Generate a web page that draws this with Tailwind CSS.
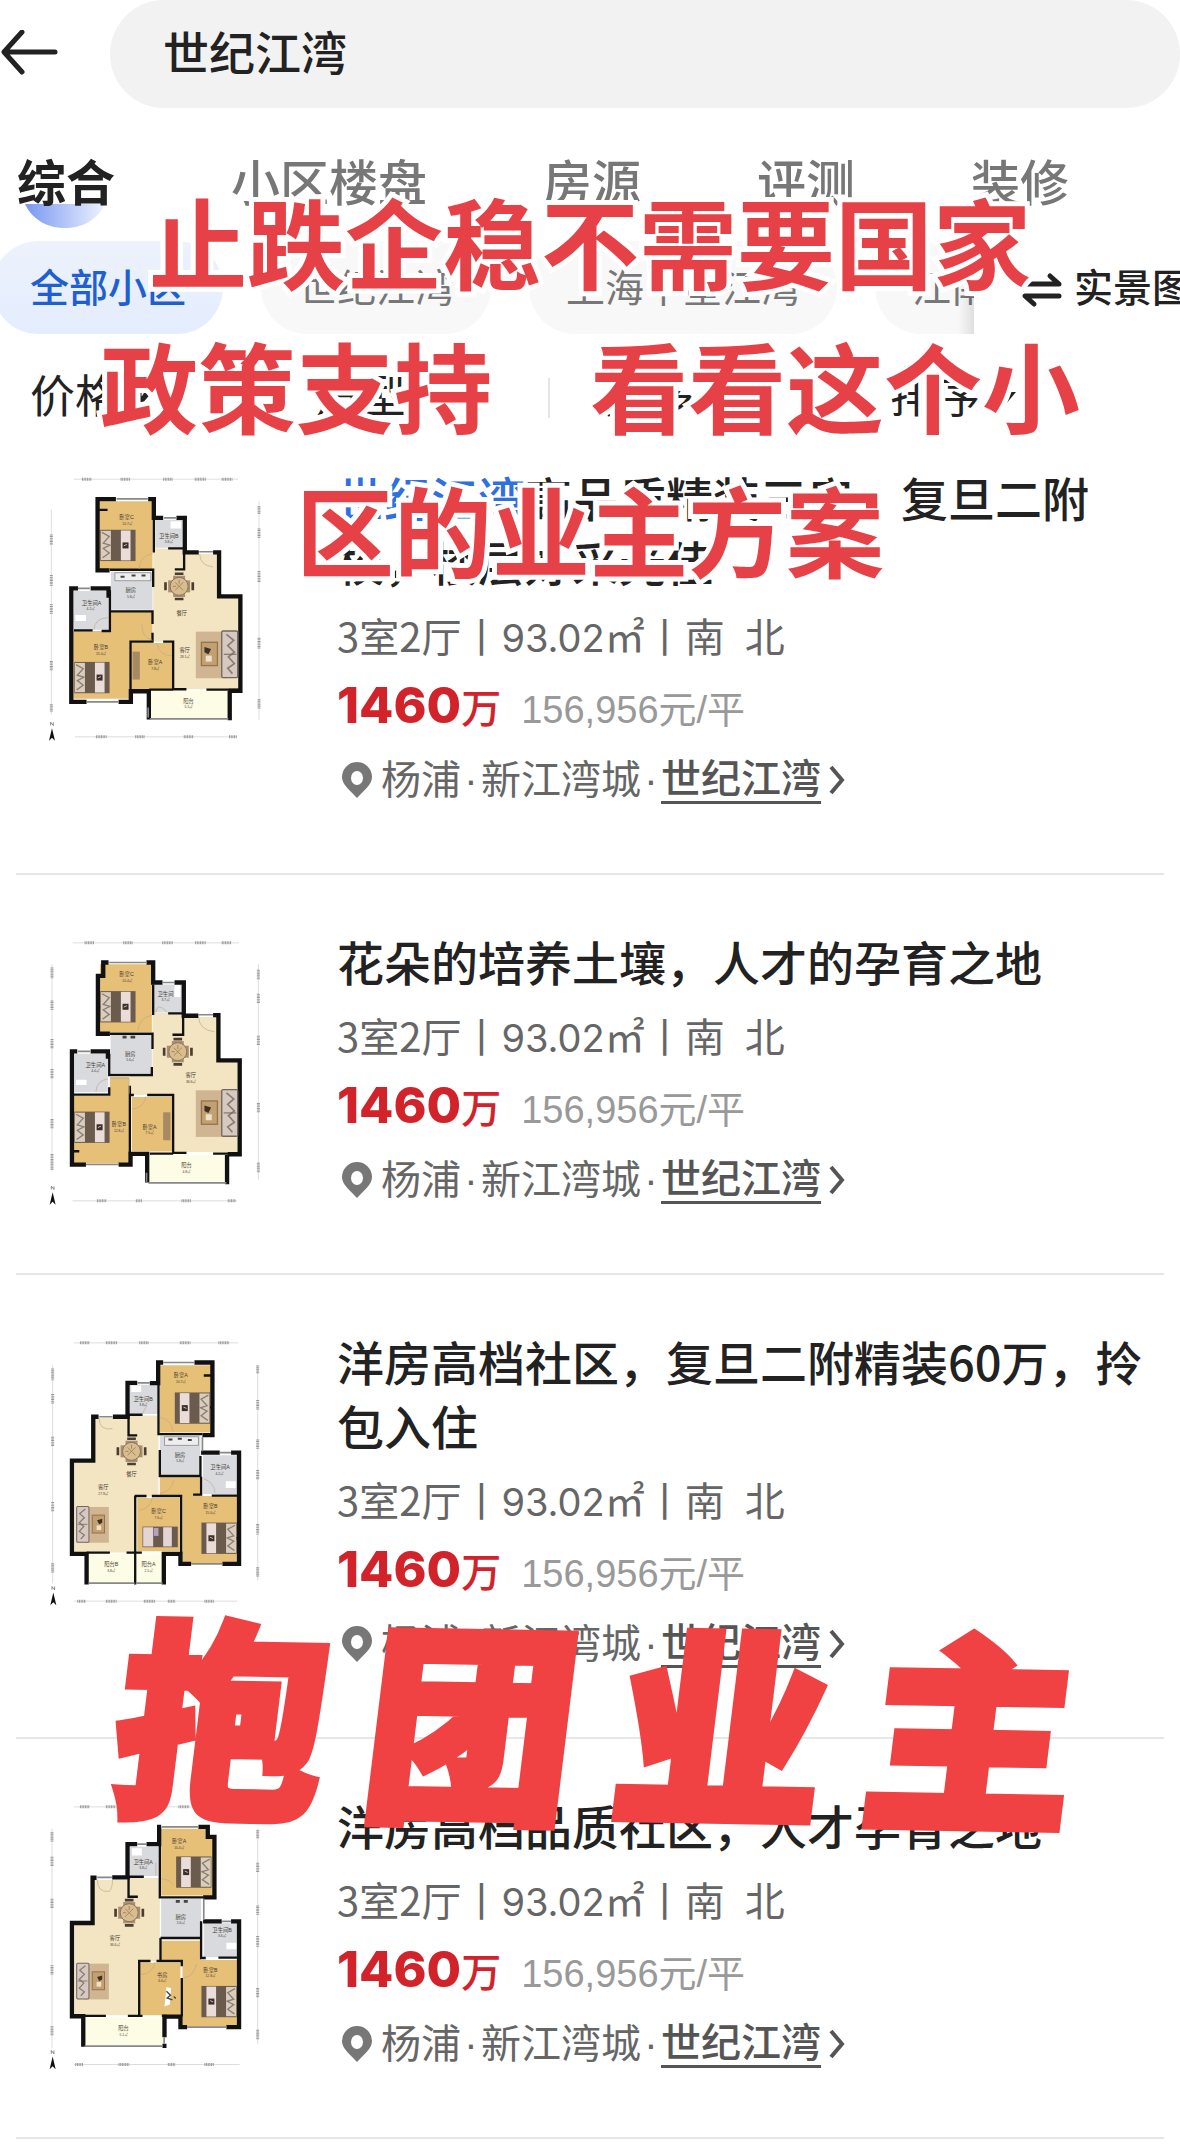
<!DOCTYPE html>
<html lang="zh-CN">
<head>
    <meta charset="UTF-8">
    <meta name="viewport" content="width=device-width, initial-scale=1.0">
    <title>世纪江湾 | 搜索</title>
    <script src="https://cdn.jsdelivr.net/npm/@tailwindcss/browser@4"></script>
</head>
<body class="bg-white text-[#222] font-['Liberation_Sans','Noto_Sans_CJK_SC',sans-serif]">

    <!-- shared furniture for the floor plans -->
    <svg class="hidden" aria-hidden="true">
        <defs>
            <symbol id="bed" viewBox="0 0 106 94" overflow="visible">
                <rect width="106" height="94" fill="#6b5b4d"/>
                <rect x="2" y="3" width="30" height="88" fill="#d9cdbd"/>
                <path d="M5 8l22 12-18 20 20 6-20 10 18 14-20 14" fill="none" stroke="#8b7f73" stroke-width="4"/>
                <rect x="62" y="2" width="29" height="90" fill="#eadcd8"/>
                <rect x="67" y="38" width="18" height="18" fill="#3d3028"/>
                <path d="M71 48l9-4" stroke="#cbb" stroke-width="3"/>
            </symbol>
            <symbol id="sofa" viewBox="0 0 130 146" overflow="visible">
                <rect y="4" width="95" height="140" fill="#cfb592"/>
                <rect x="17" y="36" width="48" height="70" fill="#c3a070" stroke="#94754f" stroke-width="4"/>
                <path d="M26 50l20 6-8 16-12-6z" fill="#3d3028"/>
                <rect x="30" y="76" width="18" height="18" fill="#efe2cc"/>
                <rect x="78" y="2" width="48" height="140" rx="4" fill="#d5c9c2" stroke="#75655c" stroke-width="4"/>
                <path d="M92 12l22 18-18 16 20 20-18 14 18 20-20 14 14 16" fill="none" stroke="#8b7b72" stroke-width="5"/>
                <path d="M84 72h38" stroke="#75655c" stroke-width="3"/>
            </symbol>
            <symbol id="dining" viewBox="0 0 90 84" overflow="visible">
                <path d="M32 4h26M32 80h26M4 30v24M86 30v24" stroke="#4a3d33" stroke-width="8"/>
                <rect x="27" y="10" width="36" height="64" fill="#a98f73"/>
                <rect x="12" y="24" width="66" height="36" fill="#a98f73"/>
                <circle cx="45" cy="42" r="27" fill="#d8bd8e" stroke="#8a7357" stroke-width="3"/>
                <path d="M33 30l24 24M57 30L33 54M45 22v12M26 42h10" stroke="#a8885c" stroke-width="3"/>
            </symbol>
            <symbol id="north" viewBox="0 0 24 60" overflow="visible">
                <path d="M12 18L3 56l9-9 9 9z" fill="#111"/>
                <path d="M8 10V0l8 10V0" fill="none" stroke="#555" stroke-width="2"/>
            </symbol>
        </defs>
    </svg>

    <main class="relative overflow-hidden pb-1">
        <header>
            <form class="flex items-center h-27">
                <button type="button" aria-label="返回" class="w-[110px] shrink-0">
                    <svg class="w-15 h-12" viewBox="0 0 60 48" fill="none" stroke="#222" stroke-width="5" stroke-linecap="round" stroke-linejoin="round">
                        <path d="M55 22H5M22 2L4 22l18 20"/>
                    </svg>
                </button>
                <input type="search" aria-label="搜索小区" value="世纪江湾" class="flex-1 min-w-0 h-27 pl-[53px] pr-10 pb-2 rounded-full bg-[#f2f2f2] text-[46px] font-medium outline-none appearance-none">
            </form>

            <nav class="flex gap-29 px-[17px] pt-10 h-[133px] text-[49px] leading-[72px] text-[#777] font-medium whitespace-nowrap">
                <button type="button" class="relative h-[72px] font-bold text-[#222]">
                    <svg class="absolute left-2 top-14 w-20 h-6" viewBox="0 0 80 24">
                        <defs>
                            <linearGradient id="smile" x1="0" x2="1"><stop offset="0" stop-color="#7897f0"/><stop offset="1" stop-color="#eef3ff"/></linearGradient>
                        </defs>
                        <path d="M0 0h80C72 17 56 24 40 24S8 17 0 0z" fill="url(#smile)"/>
                    </svg>
                    <span class="relative">综合</span>
                </button>
                <button type="button" class="h-[72px]">小区楼盘</button>
                <button type="button" class="h-[72px]">房源</button>
                <button type="button" class="h-[72px]">评测</button>
                <button type="button" class="h-[72px]">装修</button>
            </nav>

            <div class="flex h-[93px] text-[39px] whitespace-nowrap">
                <div class="relative flex flex-1 min-w-0 gap-[38px] -ml-2 overflow-hidden text-[#777]">
                    <button type="button" class="shrink-0 pt-1 pl-[38px] pr-[37px] rounded-full bg-linear-to-b from-[#edf2fb] to-[#e4edff] text-[#1f5fd0] font-medium">全部小区</button>
                    <button type="button" class="shrink-0 pt-1 px-[37px] rounded-full bg-[#f8f8f8]">世纪江湾</button>
                    <button type="button" class="shrink-0 pt-1 px-[37px] rounded-full bg-[#f8f8f8]">上海中星江湾</button>
                    <button type="button" class="shrink-0 pt-1 px-[37px] rounded-full bg-[#f8f8f8]">江南</button>
                    <div class="absolute right-0 inset-y-0 w-4 bg-linear-to-r from-transparent to-black/10"></div>
                </div>
                <button type="button" class="flex items-center gap-3 w-[206px] pt-1 pl-12 shrink-0 overflow-hidden font-medium">
                    <svg class="w-10 h-9 shrink-0" viewBox="0 0 40 36" fill="none" stroke="#222" stroke-width="5" stroke-linecap="round" stroke-linejoin="round">
                        <path d="M3 12h34L28 4M37 24H3l9 8"/>
                    </svg>
                    实景图
                </button>
            </div>

            <div class="flex items-center h-31 pt-1 pl-[30px] text-[45px] whitespace-nowrap">
                <button type="button" class="flex items-center gap-3 w-[286px]">价格
                    <svg class="w-5 h-3" viewBox="0 0 20 12"><path d="M0 0h20L10 12z" fill="#222"/></svg>
                </button>
                <button type="button" class="flex items-center gap-3 w-[232px]">户型
                    <svg class="w-5 h-3" viewBox="0 0 20 12"><path d="M0 0h20L10 12z" fill="#222"/></svg>
                </button>
                <span class="w-[2px] h-10 bg-[#e5e5e5]"></span>
                <button type="button" class="flex items-center gap-3 w-[340px] pl-[54px]">更多
                    <svg class="w-5 h-3" viewBox="0 0 20 12"><path d="M0 0h20L10 12z" fill="#222"/></svg>
                </button>
                <button type="button" class="flex items-center gap-4">排序
                    <svg class="w-5 h-3" viewBox="0 0 20 12"><path d="M0 0h20L10 12z" fill="#222"/></svg>
                </button>
            </div>
        </header>

        <section class="px-4">
            <article class="flex pt-[7px] pb-[52px] border-b-2 border-[#e6e6e6]">
                <svg class="w-[233px] h-70 mt-[6px] ml-6 mr-16 shrink-0" viewBox="120 90 700 840" role="img" aria-label="户型图">
                    <g stroke="#ccc" stroke-width="2"><path d="M222 114H715M225 888H712M154 205V820M778 180V838"/></g>
                    <g fill="none" stroke="#999" stroke-width="9" stroke-dasharray="3 2">
                        <path d="M246 114h30M362 114h30M490 114h30M585 114h34M666 114h32M288 888h32M406 888h30M552 888h30M688 888h24M154 280v32M154 402v32M154 490v30M154 660v28M154 790v22M778 195v24M778 262v30M778 390v34M778 590v34M778 775v30"/>
                    </g>
                    <path d="M460 322h90v16h110v132h60v275H520V602h-60z" fill="#f3e5c1"/>
                    <path d="M298 180h160v204H298zM220 570h113v-58h125v90h-68v172H220zM394 606h124v138H394z" fill="#e7c078"/>
                    <path d="M466 236h82v84h-82zM333 392h125v114H333zM222 450h104v116H222z" fill="#d9dade"/>
                    <path d="M450 750h236v82H450z" fill="#fdfce5"/>
                    <path d="M345 395h108v24H345z" fill="#eee" stroke="#777" stroke-width="2"/>
                    <path d="M362 407h12M395 403h12M425 403h12" stroke="#444" stroke-width="6"/>
                    <path d="M512 240h32v22h-32zM226 522h32v18h-32z" fill="#fff"/>
                    <path d="M398 632h22v84h-22z" fill="#a88a62"/>
                    <g fill="none" stroke="#111" stroke-width="13">
                        <path d="M348 174H293v214h36M445 174h17v56h28M530 230h25v104h42M640 334h18v132h64v284h-36M234 442H214v341h46M272 442h54v28M356 783h37v-32h54v85M690 750v88"/>
                    </g>
                    <g fill="none" stroke="#111" stroke-width="7">
                        <path d="M462 236v98M330 386h130v52M330 448v122h-25M222 568h56M332 511h126v38M458 575v27h-66v146M490 602h30v143h40M505 322h48v63h-28M298 206h25M520 746h-72M620 746h100"/>
                    </g>
                    <path d="M350 173h94M234 442h36M260 783h96M450 834h236M598 332h42M445 800v30M492 230h38" stroke="#888" stroke-width="5"/>
                    <path d="M418 384q0-40 40-46M600 340q0 32 40 38M426 550q0 40 32 48M470 606q10 40 46 38M282 566q2-34 42-36" fill="none" stroke="#b9a98c" stroke-width="2"/>
                    <use href="#bed" x="301" y="266" width="106" height="94"/>
                    <use href="#bed" x="223" y="663" width="106" height="94"/>
                    <use href="#dining" x="493" y="394" width="90" height="84"/>
                    <use href="#sofa" x="588" y="568" width="130" height="146"/>
                    <use href="#north" x="144" y="844" width="24" height="60"/>
                    <g font-size="16" fill="#443a30" text-anchor="middle">
                        <text x="380" y="235">卧室C</text><text x="382" y="252" font-size="10">10.7㎡</text>
                        <text x="507" y="291">卫生间B</text><text x="507" y="307" font-size="10">3.8㎡</text>
                        <text x="393" y="453">厨房</text><text x="393" y="470" font-size="10">5.8㎡</text>
                        <text x="275" y="491">卫生间A</text><text x="272" y="507" font-size="10">4.2㎡</text>
                        <text x="546" y="521">餐厅</text>
                        <text x="303" y="625">卧室B</text><text x="303" y="641" font-size="10">15.0㎡</text>
                        <text x="466" y="669">卧室A</text><text x="466" y="686" font-size="10">7.8㎡</text>
                        <text x="555" y="633">客厅</text><text x="555" y="650" font-size="10">28.1㎡</text>
                        <text x="566" y="785">阳台</text><text x="566" y="802" font-size="10">5.1㎡</text>
                    </g>
                </svg>
                <div class="flex-1 min-w-0">
                    <h2 class="font-['Noto_Sans_CJK_SC',sans-serif] text-[47px] leading-16 font-medium"><span class="text-[#2f6fe0]">世纪江湾</span>高品质精装三房，复旦二附校，楼层好采光佳</h2>
                    <p class="mt-[9px] h-[69px] font-['Noto_Sans_CJK_SC',sans-serif] text-[40px] leading-[66px] text-[#666]">3室2厅丨<span class="font-['Inter'] text-[38px]">93.02</span>㎡丨南&ensp;北</p>
                    <p class="flex items-baseline h-17 leading-[68px] text-[#d2232a]"><strong class="font-['Inter'] text-[50px] font-extrabold">1460</strong><span class="text-[40px] font-medium">万</span><span class="ml-5 text-[38px] text-[#999]">156,956元/平</span></p>
                    <p class="flex items-center text-[40px] leading-[82px] text-[#666] whitespace-nowrap">
                        <svg class="w-8 h-9 ml-1 mr-2 shrink-0" viewBox="0 0 32 36"><path d="M16 0a15 15 0 0 1 15 15c0 8-8 13-15 21C9 28 1 23 1 15A15 15 0 0 1 16 0zm0 9a6 7 0 1 0 0 14 6 7 0 0 0 0-14z" fill="#777" fill-rule="evenodd"/></svg>
                        杨浦<span class="w-5 text-center">·</span>新江湾城<span class="w-5 text-center">·</span><a href="#" class="leading-11 border-b-3 border-[#555] font-medium text-[#555]">世纪江湾</a>
                        <svg class="w-4 h-8 ml-2" viewBox="0 0 16 32" fill="none" stroke="#555" stroke-width="4"><path d="M2 3l11 13L2 29"/></svg>
                    </p>
                </div>
            </article>

            <article class="flex pt-[54px] pb-[52px] border-b-2 border-[#e6e6e6]">
                <svg class="w-[233px] h-70 mt-[6px] ml-6 mr-16 shrink-0" viewBox="120 108 700 840" role="img" aria-label="户型图">
                    <g stroke="#ccc" stroke-width="2"><path d="M218 131H718M218 906H712M156 195V815M776 195V842"/></g>
                    <g fill="none" stroke="#999" stroke-width="9" stroke-dasharray="3 2">
                        <path d="M254 131h30M370 131h30M487 131h32M586 131h32M666 131h30M291 906h30M408 906h20M545 906h30M684 906h24M156 205v32M156 304v28M156 420v30M156 510v30M156 660v30M156 765v50M776 212v30M776 284v28M776 410v28M776 612v28M776 792v28"/>
                    </g>
                    <path d="M458 342h90v12h110v130h60v275H522V588H390v-58h68z" fill="#f3e5c1"/>
                    <path d="M300 195h156v204H300zM222 590h108v-56h58v260H222zM396 594h122v164H396z" fill="#e7c078"/>
                    <path d="M462 256h86v84h-86zM332 408h124v114H332zM224 464h100v116H224z" fill="#d9dade"/>
                    <path d="M448 768h230v80H448z" fill="#fdfce5"/>
                    <path d="M368 414h12M392 414h14" stroke="#444" stroke-width="8"/>
                    <path d="M524 258h18v36h-18zM228 542h32v16h-32z" fill="#fff"/>
                    <path d="M490 640h22v84h-22z" fill="#a88a62"/>
                    <g fill="none" stroke="#111" stroke-width="13">
                        <path d="M326 190H310v40H294v174h36M440 190h20v60h28M524 250h28v100h44M640 348h16v136h64v282h-36M232 457H216v340h42M272 457h52v22M356 797h36v-32h50v86M682 768v88"/>
                    </g>
                    <g fill="none" stroke="#111" stroke-width="7">
                        <path d="M460 256v92M330 404h128v46M328 464v64h128v-24M328 565v22H222M390 560v200M390 588h12M442 588h78v174h40M505 343h45v64h-32M222 757h16M520 764h-70M640 764h80M302 325h12"/>
                    </g>
                    <path d="M328 190h112M234 457h36M258 797h98M446 852h234M596 347h44M440 822v28M488 250h36" stroke="#888" stroke-width="5"/>
                    <path d="M414 395q4-40 42-46M596 354q4 40 48 44M396 630q36-2 42-38M332 538h56v46M288 578q2-34 36-38M468 340q4-34 34 0" fill="none" stroke="#b9a98c" stroke-width="2"/>
                    <use href="#bed" x="301" y="276" width="106" height="94"/>
                    <use href="#bed" x="223" y="638" width="106" height="94"/>
                    <use href="#dining" x="489" y="416" width="90" height="84"/>
                    <use href="#sofa" x="588" y="570" width="130" height="146"/>
                    <use href="#north" x="146" y="862" width="24" height="60"/>
                    <g font-size="16" fill="#443a30" text-anchor="middle">
                        <text x="380" y="232">卧室C</text><text x="382" y="249" font-size="10">10.4㎡</text>
                        <text x="497" y="291">卫生间</text><text x="497" y="307" font-size="10">3.7㎡</text>
                        <text x="391" y="470">厨房</text><text x="391" y="487" font-size="10">5.6㎡</text>
                        <text x="286" y="503">卫生间A</text><text x="286" y="519" font-size="10">4.4㎡</text>
                        <text x="573" y="534">客厅</text><text x="573" y="552" font-size="10">36.6㎡</text>
                        <text x="357" y="682">卧室B</text><text x="357" y="698" font-size="10">12.8㎡</text>
                        <text x="449" y="690">卧室A</text><text x="449" y="706" font-size="10">7.5㎡</text>
                        <text x="560" y="804">阳台</text><text x="560" y="821" font-size="10">4.8㎡</text>
                    </g>
                </svg>
                <div class="flex-1 min-w-0">
                    <h2 class="font-['Noto_Sans_CJK_SC',sans-serif] text-[47px] leading-16 font-medium">花朵的培养土壤，人才的孕育之地</h2>
                    <p class="mt-[9px] h-[69px] font-['Noto_Sans_CJK_SC',sans-serif] text-[40px] leading-[66px] text-[#666]">3室2厅丨<span class="font-['Inter'] text-[38px]">93.02</span>㎡丨南&ensp;北</p>
                    <p class="flex items-baseline h-17 leading-[68px] text-[#d2232a]"><strong class="font-['Inter'] text-[50px] font-extrabold">1460</strong><span class="text-[40px] font-medium">万</span><span class="ml-5 text-[38px] text-[#999]">156,956元/平</span></p>
                    <p class="flex items-center text-[40px] leading-[82px] text-[#666] whitespace-nowrap">
                        <svg class="w-8 h-9 ml-1 mr-2 shrink-0" viewBox="0 0 32 36"><path d="M16 0a15 15 0 0 1 15 15c0 8-8 13-15 21C9 28 1 23 1 15A15 15 0 0 1 16 0zm0 9a6 7 0 1 0 0 14 6 7 0 0 0 0-14z" fill="#777" fill-rule="evenodd"/></svg>
                        杨浦<span class="w-5 text-center">·</span>新江湾城<span class="w-5 text-center">·</span><a href="#" class="leading-11 border-b-3 border-[#555] font-medium text-[#555]">世纪江湾</a>
                        <svg class="w-4 h-8 ml-2" viewBox="0 0 16 32" fill="none" stroke="#555" stroke-width="4"><path d="M2 3l11 13L2 29"/></svg>
                    </p>
                </div>
            </article>

            <article class="flex pt-[54px] pb-[52px] border-b-2 border-[#e6e6e6]">
                <svg class="w-[233px] h-70 mt-[6px] ml-6 mr-16 shrink-0" viewBox="120 105 700 840" role="img" aria-label="户型图">
                    <g stroke="#ccc" stroke-width="2"><path d="M222 128H715M222 904H712M158 195V850M774 195V842"/></g>
                    <g fill="none" stroke="#999" stroke-width="9" stroke-dasharray="3 2">
                        <path d="M240 128h30M318 128h34M418 128h30M540 128h32M656 128h32M232 904h26M318 904h32M432 904h34M504 904h22M614 904h30M158 205v36M158 282v30M158 410v28M158 606v30M158 790v30M774 196v24M774 300v30M774 418v30M774 510v28M774 672v32M774 802v30"/>
                    </g>
                    <path d="M476 346h-90v8H284v132h-60v272h182V590h70z" fill="#f3e5c1"/>
                    <path d="M480 195h154v202H480zM480 532h122v56h110v204H548V590h-68zM412 594h128v160H412z" fill="#e7c078"/>
                    <path d="M390 254h84v88h-84zM480 406h122v118H480zM610 466h102v116H610z" fill="#d9dade"/>
                    <path d="M268 762h136v88H268zM410 762h76v88h-76z" fill="#fdfce5"/>
                    <path d="M494 410h102v26H494z" fill="#eee" stroke="#777" stroke-width="2"/>
                    <path d="M506 418h12M534 416h12M564 420h12" stroke="#444" stroke-width="6"/>
                    <path d="M394 256h30v20h-30zM678 544h30v20h-30z" fill="#fff"/>
                    <g fill="none" stroke="#111" stroke-width="13">
                        <path d="M490 187H475v62h-25M584 187h54v218h-30M412 248H383v102h-44M296 350H280v132H216v280h44v92M604 458h56M694 458h24v334h-50M574 792h-32v-30h-50v92"/>
                    </g>
                    <g fill="none" stroke="#111" stroke-width="7">
                        <path d="M476 250v152h132M428 344h-42v62h26M480 450v78h122v-60M604 530v54h-24M636 587h76M484 588h-8M456 588h88v172M406 588v266M440 588h-36M380 758h46M260 758h70M612 226h22M622 322h12M706 715h12"/>
                    </g>
                    <path d="M490 187h94M412 248h38M298 350h40M660 458h34M574 792h94M266 850h138M408 850h80M608 410v44" stroke="#888" stroke-width="5"/>
                    <path d="M520 395q-4-36-40-44M298 356q0 36 40 30M480 580q36-4 42-42M416 632q36-6 42-40M646 578q-4-32-34-42M428 340l12-22" fill="none" stroke="#b9a98c" stroke-width="2"/>
                    <g transform="matrix(-1 0 0 1 1160 0)">
                        <use href="#bed" x="529" y="277" width="106" height="94"/>
                        <use href="#bed" x="449" y="668" width="106" height="94"/>
                    </g>
                    <g transform="translate(428 680)">
                        <rect width="106" height="62" fill="#6b5b4d"/>
                        <path d="M2 2h30v58H2zM62 2h26v58H62z" fill="#e2d5d4"/>
                        <path d="M34 4h14v24H34z" fill="#b6a2bd"/>
                    </g>
                    <use href="#dining" x="350" y="412" width="90" height="84"/>
                    <use href="#sofa" x="-340" y="618" width="126" height="112" transform="scale(-1 1)"/>
                    <use href="#north" x="148" y="860" width="24" height="60"/>
                    <g font-size="16" fill="#443a30" text-anchor="middle">
                        <text x="543" y="232">卧室A</text><text x="543" y="249" font-size="10">10.7㎡</text>
                        <text x="430" y="302">卫生间B</text><text x="430" y="318" font-size="10">3.8㎡</text>
                        <text x="541" y="470">厨房</text><text x="541" y="487" font-size="10">5.8㎡</text>
                        <text x="661" y="508">卫生间A</text><text x="659" y="524" font-size="10">4.2㎡</text>
                        <text x="395" y="529">餐厅</text>
                        <text x="310" y="568">客厅</text><text x="310" y="586" font-size="10">27.9㎡</text>
                        <text x="632" y="625">卧室B</text><text x="632" y="641" font-size="10">15.0㎡</text>
                        <text x="476" y="640">卧室C</text><text x="476" y="657" font-size="10">7.6㎡</text>
                        <text x="334" y="799">阳台B</text><text x="334" y="816" font-size="10">3.8㎡</text>
                        <text x="446" y="799">阳台A</text><text x="446" y="816" font-size="10">2.1㎡</text>
                    </g>
                </svg>
                <div class="flex-1 min-w-0">
                    <h2 class="font-['Noto_Sans_CJK_SC',sans-serif] text-[47px] leading-16 font-medium">洋房高档社区，复旦二附精装60万，拎包入住</h2>
                    <p class="mt-[9px] h-[69px] font-['Noto_Sans_CJK_SC',sans-serif] text-[40px] leading-[66px] text-[#666]">3室2厅丨<span class="font-['Inter'] text-[38px]">93.02</span>㎡丨南&ensp;北</p>
                    <p class="flex items-baseline h-17 leading-[68px] text-[#d2232a]"><strong class="font-['Inter'] text-[50px] font-extrabold">1460</strong><span class="text-[40px] font-medium">万</span><span class="ml-5 text-[38px] text-[#999]">156,956元/平</span></p>
                    <p class="flex items-center text-[40px] leading-[82px] text-[#666] whitespace-nowrap">
                        <svg class="w-8 h-9 ml-1 mr-2 shrink-0" viewBox="0 0 32 36"><path d="M16 0a15 15 0 0 1 15 15c0 8-8 13-15 21C9 28 1 23 1 15A15 15 0 0 1 16 0zm0 9a6 7 0 1 0 0 14 6 7 0 0 0 0-14z" fill="#777" fill-rule="evenodd"/></svg>
                        杨浦<span class="w-5 text-center">·</span>新江湾城<span class="w-5 text-center">·</span><a href="#" class="leading-11 border-b-3 border-[#555] font-medium text-[#555]">世纪江湾</a>
                        <svg class="w-4 h-8 ml-2" viewBox="0 0 16 32" fill="none" stroke="#555" stroke-width="4"><path d="M2 3l11 13L2 29"/></svg>
                    </p>
                </div>
            </article>

            <article class="flex pt-[54px] pb-[52px] border-b-2 border-[#e6e6e6]">
                <svg class="w-[233px] h-70 mt-[6px] ml-6 mr-16 shrink-0" viewBox="120 63 700 840" role="img" aria-label="户型图">
                    <g stroke="#ccc" stroke-width="2"><path d="M222 86H715M222 860H720M156 152V810M774 152V798"/></g>
                    <g fill="none" stroke="#999" stroke-width="9" stroke-dasharray="3 2">
                        <path d="M240 86h30M318 86h30M536 86h32M226 860h24M356 860h32M504 860h22M614 860h30M156 162v28M156 236v30M156 362v28M156 562v30M156 744v30M774 156v26M774 254v30M774 382v30M774 474v32M774 630v28M774 756v30"/>
                    </g>
                    <path d="M480 300h-94v6H284v130h-60v276h190V550h66z" fill="#f3e5c1"/>
                    <path d="M484 152h134v28h20v172H484zM484 488h120v58h108v200H548V550h-64zM420 554h122v158H420z" fill="#e7c078"/>
                    <path d="M390 206h86v88h-86zM484 362h120v118H484zM612 436h102v102H612z" fill="#d9dade"/>
                    <path d="M256 720h234v82H256z" fill="#fdfce5"/>
                    <path d="M528 370h12M552 370h12" stroke="#444" stroke-width="8"/>
                    <path d="M396 210h30v22h-30zM680 494h30v20h-30z" fill="#fff"/>
                    <g fill="none" stroke="#111" stroke-width="13">
                        <path d="M484 146h-6v52h-38M596 146h28v30h20v182h-34M412 198H383v100h-46M290 299H278v136H216v280h34v92M610 430h56M694 430h24v318h-38M562 748h-20v-32h-48v62M488 804h12"/>
                    </g>
                    <g fill="none" stroke="#111" stroke-width="7">
                        <path d="M480 200v158h130M432 296h-46v60h28M482 480h120M482 480v68M604 430v110h14M656 539h56M470 549h76v16M546 600v116M452 549h-34v166M384 714h44M486 714h14M250 714h68"/>
                    </g>
                    <path d="M486 146h110M412 198h28M292 298h44M666 430h28M562 748h118M254 805h234M612 362v64M493 778v20" stroke="#888" stroke-width="5"/>
                    <path d="M484 302q30 2 36 20M292 304q0 40 36 36q10-10 10-36M424 590q34-2 42-38M552 600q30-4 38-42M468 292v-38" fill="none" stroke="#b9a98c" stroke-width="2"/>
                    <g transform="matrix(-1 0 0 1 1160 0)">
                        <use href="#bed" x="525" y="235" width="106" height="94"/>
                        <use href="#bed" x="449" y="624" width="106" height="94"/>
                    </g>
                    <path d="M500 628l14 2-4 50-16 6z" fill="#fff"/>
                    <path d="M500 640l12 12-10 8 16 6M522 656l6 6" fill="none" stroke="#444" stroke-width="4"/>
                    <use href="#dining" x="343" y="362" width="90" height="84"/>
                    <use href="#sofa" x="-340" y="554" width="126" height="112" transform="scale(-1 1)"/>
                    <use href="#north" x="146" y="818" width="24" height="60"/>
                    <g font-size="16" fill="#443a30" text-anchor="middle">
                        <text x="538" y="196">卧室A</text><text x="538" y="213" font-size="10">10.4㎡</text>
                        <text x="430" y="257">卫生间A</text><text x="430" y="273" font-size="10">3.8㎡</text>
                        <text x="543" y="422">厨房</text><text x="543" y="439" font-size="10">5.6㎡</text>
                        <text x="667" y="462">卫生间B</text><text x="667" y="478" font-size="10">3.6㎡</text>
                        <text x="345" y="485">客厅</text><text x="345" y="503" font-size="10">36.6㎡</text>
                        <text x="632" y="581">卧室B</text><text x="632" y="597" font-size="10">12.8㎡</text>
                        <text x="487" y="597">书房</text><text x="487" y="613" font-size="10">6.6㎡</text>
                        <text x="371" y="757">阳台</text><text x="371" y="774" font-size="10">5.1㎡</text>
                    </g>
                </svg>
                <div class="flex-1 min-w-0">
                    <h2 class="font-['Noto_Sans_CJK_SC',sans-serif] text-[47px] leading-16 font-medium">洋房高档品质社区，人才孕育之地</h2>
                    <p class="mt-[9px] h-[69px] font-['Noto_Sans_CJK_SC',sans-serif] text-[40px] leading-[66px] text-[#666]">3室2厅丨<span class="font-['Inter'] text-[38px]">93.02</span>㎡丨南&ensp;北</p>
                    <p class="flex items-baseline h-17 leading-[68px] text-[#d2232a]"><strong class="font-['Inter'] text-[50px] font-extrabold">1460</strong><span class="text-[40px] font-medium">万</span><span class="ml-5 text-[38px] text-[#999]">156,956元/平</span></p>
                    <p class="flex items-center text-[40px] leading-[82px] text-[#666] whitespace-nowrap">
                        <svg class="w-8 h-9 ml-1 mr-2 shrink-0" viewBox="0 0 32 36"><path d="M16 0a15 15 0 0 1 15 15c0 8-8 13-15 21C9 28 1 23 1 15A15 15 0 0 1 16 0zm0 9a6 7 0 1 0 0 14 6 7 0 0 0 0-14z" fill="#777" fill-rule="evenodd"/></svg>
                        杨浦<span class="w-5 text-center">·</span>新江湾城<span class="w-5 text-center">·</span><a href="#" class="leading-11 border-b-3 border-[#555] font-medium text-[#555]">世纪江湾</a>
                        <svg class="w-4 h-8 ml-2" viewBox="0 0 16 32" fill="none" stroke="#555" stroke-width="4"><path d="M2 3l11 13L2 29"/></svg>
                    </p>
                </div>
            </article>
        </section>

        <!-- captions laid over the list -->
        <p class="absolute inset-x-0 top-44 text-center text-[98px] leading-36 font-bold text-[#e64146] whitespace-nowrap pointer-events-none [-webkit-text-stroke:10px_white] [paint-order:stroke_fill]">止跌企稳不需要国家<br>政策支持　看看这个小<br>区的业主方案</p>
        <p class="absolute inset-x-0 top-[1605px] flex justify-center gap-10 pl-3 text-[210px] leading-[260px] font-black rotate-1 -skew-x-6 text-[#f04143] whitespace-nowrap pointer-events-none [-webkit-text-stroke:8px_#f04143]"><span>抱</span><span>团</span><span>业</span><span>主</span></p>
    </main>

</body>
</html>
